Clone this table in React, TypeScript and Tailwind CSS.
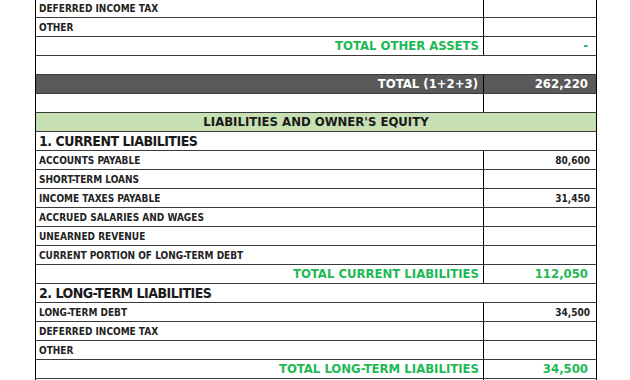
import React from 'react';

type Row =
  | { kind: 'item'; label: string; value?: string }
  | { kind: 'total'; label: string; value: string }
  | { kind: 'blank'; split?: boolean }
  | { kind: 'grand'; label: string; value: string }
  | { kind: 'header'; label: string }
  | { kind: 'section'; label: string };

const rows: Row[] = [
  { kind: 'item', label: 'DEFERRED INCOME TAX' },
  { kind: 'item', label: 'OTHER' },
  { kind: 'total', label: 'TOTAL OTHER ASSETS', value: '-' },
  { kind: 'blank' },
  { kind: 'grand', label: 'TOTAL (1+2+3)', value: '262,220' },
  { kind: 'blank', split: true },
  { kind: 'header', label: "LIABILITIES AND OWNER'S EQUITY" },
  { kind: 'section', label: '1. CURRENT LIABILITIES' },
  { kind: 'item', label: 'ACCOUNTS PAYABLE', value: '80,600' },
  { kind: 'item', label: 'SHORT-TERM LOANS' },
  { kind: 'item', label: 'INCOME TAXES PAYABLE', value: '31,450' },
  { kind: 'item', label: 'ACCRUED SALARIES AND WAGES' },
  { kind: 'item', label: 'UNEARNED REVENUE' },
  { kind: 'item', label: 'CURRENT PORTION OF LONG-TERM DEBT' },
  { kind: 'total', label: 'TOTAL CURRENT LIABILITIES', value: '112,050' },
  { kind: 'section', label: '2. LONG-TERM LIABILITIES' },
  { kind: 'item', label: 'LONG-TERM DEBT', value: '34,500' },
  { kind: 'item', label: 'DEFERRED INCOME TAX' },
  { kind: 'item', label: 'OTHER' },
  { kind: 'total', label: 'TOTAL LONG-TERM LIABILITIES', value: '34,500' },
  { kind: 'blank', split: true },
];

function SheetRow({ row }: { row: Row }) {
  const base = 'flex h-[19px] border-b border-[#3a3a3a]';

  if (row.kind === 'header') {
    return (
      <div className={`${base} items-center justify-center bg-[#c6e0b4] text-[13px] text-[#1a1a1a]`}>
        {row.label}
      </div>
    );
  }
  if (row.kind === 'section') {
    return (
      <div className={`${base} items-center px-[3px] text-[14px] tracking-[-0.5px] text-[#1a1a1a]`}>
        {row.label}
      </div>
    );
  }
  if (row.kind === 'blank' && !row.split) {
    return <div className={base} />;
  }

  const left =
    row.kind === 'item'
      ? 'justify-start pl-[3px] text-[10px] text-[#222]'
      : row.kind === 'total'
        ? 'justify-end pr-[4px] text-[13px] text-[#1db954]'
        : row.kind === 'grand'
          ? 'justify-end pr-[5px] text-[13px] text-white'
          : '';
  const right =
    row.kind === 'item'
      ? 'text-[10px] text-[#222]'
      : row.kind === 'total'
        ? 'text-[13px] text-[#1db954] pr-[8px]'
        : row.kind === 'grand'
          ? 'text-[13px] text-white pr-[8px]'
          : '';

  return (
    <div className={`${base} ${row.kind === 'grand' ? 'bg-[#595959]' : ''}`}>
      <div className={`flex flex-1 items-center border-r border-black ${left}`}>
        {'label' in row ? row.label : ''}
      </div>
      <div className={`flex w-[112px] items-center justify-end pr-[6px] ${right}`}>
        {'value' in row ? row.value : ''}
      </div>
    </div>
  );
}

export default function App() {
  return (
    <div className="h-[380px] w-[630px] overflow-hidden bg-white font-['DejaVu_Sans_Condensed',sans-serif] font-bold">
      <div className="ml-[35px] -mt-[1px] w-[562px] border-x border-black">
        {rows.map((row, i) => (
          <SheetRow key={i} row={row} />
        ))}
      </div>
    </div>
  );
}
